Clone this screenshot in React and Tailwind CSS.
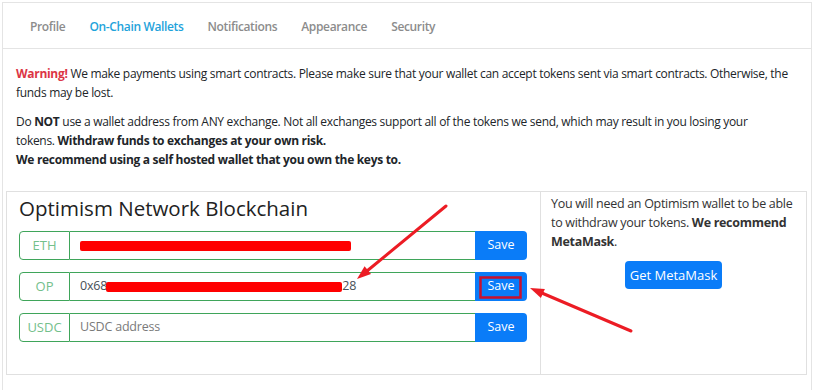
import React from 'react';

const tabs = ['Profile', 'On-Chain Wallets', 'Notifications', 'Appearance', 'Security'];

const WalletRow = ({ label, children }) => {
  return (
    <div className="flex h-[29px] w-[508px]">
      <div className="w-[51px] flex items-center justify-center border border-[#3fa55a] rounded-l-[4px] text-[13px] text-[#74c08b]">
        {label}
      </div>
      <div className="flex-1 flex items-center border-y border-[#3fa55a] pl-[10px] text-[12.5px] tracking-[-0.2px] text-[#495057]">
        {children}
      </div>
      <button className="w-[52px] bg-[#0a7cf8] text-white text-[12.5px] rounded-r-[4px]">Save</button>
    </div>
  );
};

export default function App() {
  return (
    <div className="relative w-[820px] h-[390px] bg-white overflow-hidden font-['Open_Sans',sans-serif] text-[#212529]">
      <div className="ml-[2px] mt-[2px] w-[810px] h-[400px] border border-[#e4e4e4]">
        {/* tabs */}
        <div className="h-[46px] pt-[3px] border-b border-[#e4e4e4] flex items-center pl-[27px] gap-[24px] text-[12px] tracking-[-0.35px] font-semibold text-[#8c8c8c]">
          {tabs.map((t) => (
            <span key={t} className={t === 'On-Chain Wallets' ? 'text-[#1fa3db]' : ''}>
              {t}
            </span>
          ))}
        </div>

        {/* warning */}
        <div className="pt-[15px] pl-[13px] pr-[14px] text-[12px] tracking-[-0.3px] leading-[19px] text-[#212529]">
          <p>
            <b className="text-[#dc3545]">Warning!</b> We make payments using smart contracts. Please make sure that your wallet can accept tokens sent via smart contracts. Otherwise, the funds may be lost.
          </p>
          <p className="mt-[10px] pr-[20px]">
            Do <b>NOT</b> use a wallet address from ANY exchange. Not all exchanges support all of the tokens we send, which may result in you losing your tokens. <b>Withdraw funds to exchanges at your own risk.</b>
            <br />
            <b>We recommend using a self hosted wallet that you own the keys to.</b>
          </p>
        </div>

        {/* network card */}
        <div className="mt-[22px] ml-[3px] w-[801px] h-[184px] border border-[#e0e0e0] flex">
          <div className="w-[533px] pl-[12px] pt-[1px]">
            <h2 className="text-[20.5px] leading-[30px] font-medium text-[#222]">Optimism Network Blockchain</h2>
            <div className="mt-[8px] flex flex-col gap-[12px]">
              <WalletRow label="ETH">
                <span className="inline-block w-[271px] h-[10px] bg-[#ff0000] rounded-[2px]"></span>
              </WalletRow>
              <WalletRow label="OP">
                <span>0x68</span>
                <span className="inline-block -ml-[1px] w-[236px] h-[10px] bg-[#ff0000] rounded-[2px]"></span>
                <span>28</span>
              </WalletRow>
              <WalletRow label="USDC">
                <span className="text-[#7a7a7a]">USDC address</span>
              </WalletRow>
            </div>
          </div>
          <div className="flex-1 border-l border-[#e0e0e0] pl-[10px] pr-[10px] pt-[2px] text-[12.5px] tracking-[-0.3px] leading-[19px] text-[#333]">
            <p>
              You will need an Optimism wallet to be able to withdraw your tokens. <b>We recommend MetaMask</b>.
            </p>
            <div className="mt-[10px] flex justify-center">
              <button className="w-[97px] h-[28px] bg-[#0a7cf8] text-white text-[13px] tracking-normal rounded-[4px]">Get MetaMask</button>
            </div>
          </div>
        </div>
      </div>

      {/* annotations */}
      <svg className="absolute inset-0 pointer-events-none" width="820" height="390">
        <line x1="446" y1="206" x2="367" y2="271" stroke="#ec1c24" strokeWidth="3" strokeLinecap="round" />
        <polygon points="357,279 371,274 364.6,266.2" fill="#ec1c24" />
        <line x1="631" y1="331" x2="543" y2="293.5" stroke="#ec1c24" strokeWidth="3" strokeLinecap="round" />
        <polygon points="530,288 544.9,288.9 540.9,298.1" fill="#ec1c24" />
        <rect x="480.5" y="277.5" width="40" height="20" fill="none" stroke="#c8102e" strokeWidth="2.5" />
      </svg>
    </div>
  );
}
